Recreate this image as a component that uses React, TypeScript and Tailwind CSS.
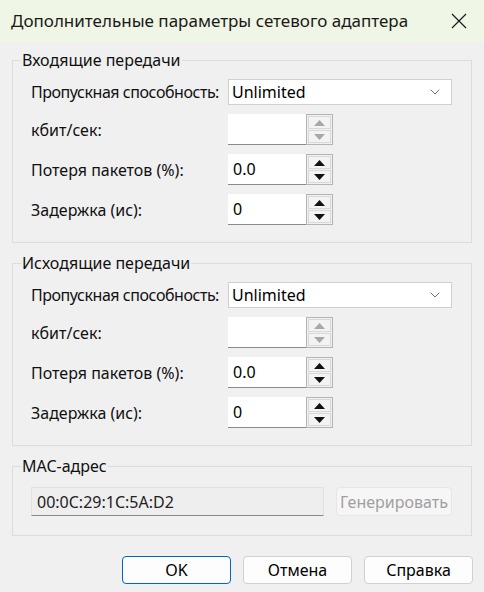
import { ChevronDown } from 'lucide-react';

function Spinner({ value, disabled }: { value: string; disabled?: boolean }) {
  const tri = disabled ? 'text-[#a8a8a8]' : 'text-[#111]';
  return (
    <div className="flex h-[31px]">
      <div className="w-[78px] h-full bg-white border-b border-[#8a8a8a] flex items-center pl-[5px] text-[16px] text-black">
        {value}
      </div>
      <div className="w-[27px] h-full border border-[#b4b4b4] flex flex-col p-[1px] gap-[1px] bg-[#f0f0f0]">
        <div className={`flex-1 border border-[#d9d9d9] bg-[#f3f3f3] flex items-center justify-center ${tri}`}>
          <svg width="11" height="6" viewBox="0 0 11 6"><path d="M5.5 0 L11 6 L0 6 Z" fill="currentColor" /></svg>
        </div>
        <div className={`flex-1 border border-[#d9d9d9] bg-[#f3f3f3] flex items-center justify-center ${tri}`}>
          <svg width="11" height="6" viewBox="0 0 11 6"><path d="M0 0 L11 0 L5.5 6 Z" fill="currentColor" /></svg>
        </div>
      </div>
    </div>
  );
}

function Row({ label, tight, children }: { label: string; tight?: boolean; children: React.ReactNode }) {
  return (
    <div className="flex items-center">
      <div className={`w-[215px] shrink-0 pl-[18px] text-[16px] text-[#111] whitespace-nowrap ${tight ? 'tracking-[-0.45px]' : ''}`}>
        {label}
      </div>
      {children}
    </div>
  );
}

function TrafficGroup({ title }: { title: string }) {
  return (
    <fieldset className="mx-[12px] border border-[#dcdcdc] pb-[17px]">
      <legend className="ml-[8px] px-[1px] text-[16px] leading-[20px] text-[#111]">{title}</legend>
      <div className="flex flex-col pt-[9px] gap-[9px]">
        <Row label="Пропускная способность:" tight>
          <div className="w-[224px] h-[26px] bg-white border border-[#d0d0d0] flex items-center justify-between pl-[3px] pr-[8px] text-[16px] text-black">
            <span>Unlimited</span>
            <ChevronDown size={16} strokeWidth={1.25} className="text-[#555]" />
          </div>
        </Row>
        <Row label="кбит/сек:">
          <Spinner value="" disabled />
        </Row>
        <Row label="Потеря пакетов (%):">
          <Spinner value="0.0" />
        </Row>
        <Row label="Задержка (ис):">
          <Spinner value="0" />
        </Row>
      </div>
    </fieldset>
  );
}

export default function App() {
  return (
    <div className="w-[484px] h-[592px] bg-[#f0f0f0] flex flex-col font-['Noto_Sans',sans-serif] overflow-hidden">
      {/* Title bar */}
      <div className="h-[42px] bg-[#eff6e5] flex items-center justify-between pl-[11px] pr-[17px] shrink-0">
        <span className="text-[17px] text-[#1a1a1a]">Дополнительные параметры сетевого адаптера</span>
        <svg width="16" height="16" viewBox="0 0 16 16" className="text-[#1a1a1a]">
          <path d="M1 1 L15 15 M15 1 L1 15" stroke="currentColor" strokeWidth="1.2" fill="none" />
        </svg>
      </div>

      <div className="flex flex-col gap-[10px] pt-[8px]">
        <TrafficGroup title="Входящие передачи" />
        <TrafficGroup title="Исходящие передачи" />

        <fieldset className="mx-[12px] border border-[#dcdcdc] pb-[19px]">
          <legend className="ml-[8px] px-[1px] text-[16px] leading-[20px] text-[#111]">MAC-адрес</legend>
          <div className="flex items-center pt-[11px] pl-[18px] gap-[12px]">
            <div className="w-[293px] h-[29px] bg-[#eeeeee] border border-[#e2e2e2] border-b-[#8a8a8a] flex items-center pl-[5px] text-[16px] text-[#222]">
              00:0C:29:1C:5A:D2
            </div>
            <button className="w-[116px] h-[29px] bg-[#f6f6f6] border border-[#e6e6e6] rounded-[4px] text-[16px] text-[#a0a0a0]">
              Генерировать
            </button>
          </div>
        </fieldset>
      </div>

      <div className="flex justify-end gap-[12px] pr-[11px] mt-[20px]">
        <button className="w-[109px] h-[28px] bg-[#fdfdfd] border border-[#0067c0] rounded-[4px] text-[16px] text-black">OK</button>
        <button className="w-[109px] h-[28px] bg-[#fdfdfd] border border-[#d0d0d0] rounded-[4px] text-[16px] text-black">Отмена</button>
        <button className="w-[109px] h-[28px] bg-[#fdfdfd] border border-[#d0d0d0] rounded-[4px] text-[16px] text-black">Справка</button>
      </div>
    </div>
  );
}
